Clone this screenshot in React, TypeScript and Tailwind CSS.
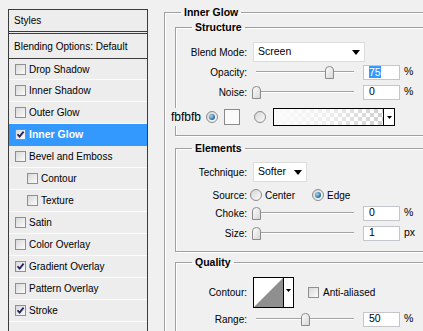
import React from 'react';

const Check = ({ checked }: { checked?: boolean }) => (
  <span className="w-[11px] h-[11px] shrink-0 border border-[#8e8f8f] bg-gradient-to-br from-[#d9d9d9] to-[#fbfbfb] flex items-center justify-center">
    {checked && (
      <svg width="9" height="9" viewBox="0 0 9 9">
        <path d="M1.5 4.2 L3.6 6.6 L7.6 1.6" stroke="#21215a" strokeWidth="1.7" fill="none" />
      </svg>
    )}
  </span>
);

const Radio = ({ on }: { on?: boolean }) => (
  <span className="w-[12px] h-[12px] shrink-0 rounded-full border border-[#8c8c8c] bg-gradient-to-br from-[#d6d6d6] to-[#fbfbfb] flex items-center justify-center">
    {on && <span className="w-[6px] h-[6px] rounded-full bg-[radial-gradient(circle_at_35%_35%,#a6d8f5,#25699c_70%)]" />}
  </span>
);

const Tri = () => (
  <svg width="8" height="5" viewBox="0 0 8 5" className="shrink-0">
    <path d="M0 0 H8 L4 5 Z" fill="#000" />
  </svg>
);

const Slider = ({ value }: { value: number }) => (
  <div className="relative w-[98px] h-[14px] shrink-0">
    <div className="absolute left-0 right-0 top-[6px] h-[2px] border-t border-[#a3a3a3] border-b border-b-white" />
    <svg
      width="9"
      height="13"
      viewBox="0 0 9 13"
      className="absolute top-[1px]"
      style={{ left: (value * 98) / 100 - 4.5 }}
    >
      <defs>
        <linearGradient id="th" x1="0" y1="0" x2="1" y2="1">
          <stop offset="0" stopColor="#ffffff" />
          <stop offset="1" stopColor="#d4d4d4" />
        </linearGradient>
      </defs>
      <path d="M0.5 4 Q0.5 0.5 4.5 0.5 Q8.5 0.5 8.5 4 V12.5 H0.5 Z" fill="url(#th)" stroke="#8a8a8a" />
    </svg>
  </div>
);

const Field = ({ v, sel, unit }: { v: string; sel?: boolean; unit: string }) => (
  <>
    <div className="ml-[9px] w-[37px] h-[15px] bg-white border border-[#c3c7cc] flex items-center pl-[5px] text-[10.5px]">
      {sel ? <span className="bg-[#3399ff] text-white leading-[12px]">{v}</span> : v}
    </div>
    <span className="ml-[4px] text-[10.5px]">{unit}</span>
  </>
);

const Row = ({ label, className = '', children }: { label?: string; className?: string; children?: React.ReactNode }) => (
  <div className={`flex items-center ${className}`}>
    <span className="w-[71px] shrink-0 text-right">{label}</span>
    {children}
  </div>
);

const Group = ({ title, className = '', children }: { title: string; className?: string; children: React.ReactNode }) => (
  <fieldset className={`border border-[#a0a0a0] shadow-[inset_1px_1px_0_#fff,1px_1px_0_#fff] ${className}`}>
    <legend className="ml-[16px] px-[3px] font-bold text-[10.5px] leading-[14px]">{title}</legend>
    {children}
  </fieldset>
);

const items: { name: string; checked?: boolean; indent?: boolean; active?: boolean }[] = [
  { name: 'Drop Shadow' },
  { name: 'Inner Shadow' },
  { name: 'Outer Glow' },
  { name: 'Inner Glow', checked: true, active: true },
  { name: 'Bevel and Emboss' },
  { name: 'Contour', indent: true },
  { name: 'Texture', indent: true },
  { name: 'Satin' },
  { name: 'Color Overlay' },
  { name: 'Gradient Overlay', checked: true },
  { name: 'Pattern Overlay' },
  { name: 'Stroke', checked: true },
];

export default function App() {
  return (
    <div className="w-[423px] h-[331px] overflow-hidden bg-[#f0f0f0] flex items-start text-black text-[10px] font-['Liberation_Sans',Arial,sans-serif]">
      {/* styles list */}
      <div className="ml-[8px] mt-[9px] w-[140px] h-[340px] shrink-0 border-x border-t border-[#3c3c3c] bg-[#ededed] flex flex-col">
        <div className="h-[22px] shrink-0 border-b border-[#3c3c3c] flex items-center pl-[5px]">Styles</div>
        <div className="h-[26px] shrink-0 mt-[1px] border-y border-[#3c3c3c] flex items-center pl-[5px]">
          Blending Options: Default
        </div>
        {items.map((it, i) => (
          <div
            key={it.name}
            className={`${i === 0 ? 'h-[21px]' : 'h-[22px]'} shrink-0 flex items-center gap-[3px] border-b ${
              it.active ? 'bg-[#3399ff] text-white font-bold text-[10.5px] border-[#3399ff]' : 'border-[#fbfbfb]'
            } ${it.indent ? 'pl-[18px]' : 'pl-[6px]'}`}
          >
            <Check checked={it.checked} />
            <span>{it.name}</span>
          </div>
        ))}
      </div>

      {/* inner glow settings */}
      <Group title="Inner Glow" className="ml-[16px] mt-[5px] w-[300px] shrink-0 pb-[20px]">
        <Group title="Structure" className="mt-[1px] ml-[10px] mr-[10px] pb-[8px]">
          <Row label="Blend Mode:" className="mt-[8px] h-[20px]">
            <div className="ml-[6px] w-[112px] h-[20px] bg-white border border-[#dcdcdc] flex items-center justify-between pl-[4px] pr-[4px] text-[10.5px]">
              Screen
              <Tri />
            </div>
          </Row>
          <Row label="Opacity:" className="h-[20px]">
            <span className="ml-[9px]" />
            <Slider value={75} />
            <Field v="75" sel unit="%" />
          </Row>
          <Row label="Noise:" className="h-[20px]">
            <span className="ml-[9px]" />
            <Slider value={0} />
            <Field v="0" unit="%" />
          </Row>
          <div className="mt-[5px] h-[20px] flex items-center">
            <span className="relative -ml-[6px] pl-[1px] bg-[#f0f0f0] text-[12px]">fbfbfb</span>
            <span className="ml-[5px]">
              <Radio on />
            </span>
            <div className="ml-[6px] w-[16px] h-[16px] bg-[#fbfbfb] border border-[#8a8a8a]" />
            <span className="ml-[14px]">
              <Radio />
            </span>
            <div className="ml-[7px] w-[122px] h-[18px] border border-black flex">
              <div className="flex-1 bg-[repeating-conic-gradient(#cfcfcf_0_25%,#ffffff_0_50%)] bg-[length:8px_8px]">
                <div className="w-full h-full bg-gradient-to-r from-[#fbfbfb] via-[#fbfbfb]/70 to-transparent" />
              </div>
              <div className="w-[11px] border-l border-black bg-white flex items-center justify-center">
                <svg width="5" height="3" viewBox="0 0 5 3">
                  <path d="M0 0 H5 L2.5 3 Z" fill="#000" />
                </svg>
              </div>
            </div>
          </div>
        </Group>

        <Group title="Elements" className="mt-[5px] ml-[10px] mr-[10px] pb-[9px]">
          <Row label="Technique:" className="mt-[7px] h-[20px]">
            <div className="ml-[6px] w-[54px] h-[20px] bg-white border border-[#dcdcdc] flex items-center justify-between pl-[4px] pr-[4px] text-[10.5px]">
              Softer
              <Tri />
            </div>
          </Row>
          <Row label="Source:" className="mt-[4px] h-[18px]">
            <span className="ml-[3px]">
              <Radio />
            </span>
            <span className="ml-[3px]">Center</span>
            <span className="ml-[17px]">
              <Radio on />
            </span>
            <span className="ml-[3px]">Edge</span>
          </Row>
          <Row label="Choke:" className="h-[18px]">
            <span className="ml-[9px]" />
            <Slider value={0} />
            <Field v="0" unit="%" />
          </Row>
          <Row label="Size:" className="mt-[2px] h-[18px]">
            <span className="ml-[9px]" />
            <Slider value={0} />
            <Field v="1" unit="px" />
          </Row>
        </Group>

        <Group title="Quality" className="mt-[3px] ml-[10px] mr-[10px] pb-[20px]">
          <Row label="Contour:" className="mt-[8px] h-[30px]">
            <div className="ml-[6px] w-[41px] h-[31px] border border-black flex bg-white">
              <svg width="29" height="29" viewBox="0 0 29 29" className="shrink-0">
                <path d="M0 29 L29 0 V29 Z" fill="#8f8f8f" />
              </svg>
              <div className="flex-1 border-l border-black flex justify-center pt-[11px]">
                <svg width="5" height="3" viewBox="0 0 5 3">
                  <path d="M0 0 H5 L2.5 3 Z" fill="#000" />
                </svg>
              </div>
            </div>
            <span className="ml-[14px]">
              <Check />
            </span>
            <span className="ml-[4px]">Anti-aliased</span>
          </Row>
          <Row label="Range:" className="mt-[3px] h-[18px]">
            <span className="ml-[9px]" />
            <Slider value={50} />
            <Field v="50" unit="%" />
          </Row>
        </Group>
      </Group>
    </div>
  );
}
